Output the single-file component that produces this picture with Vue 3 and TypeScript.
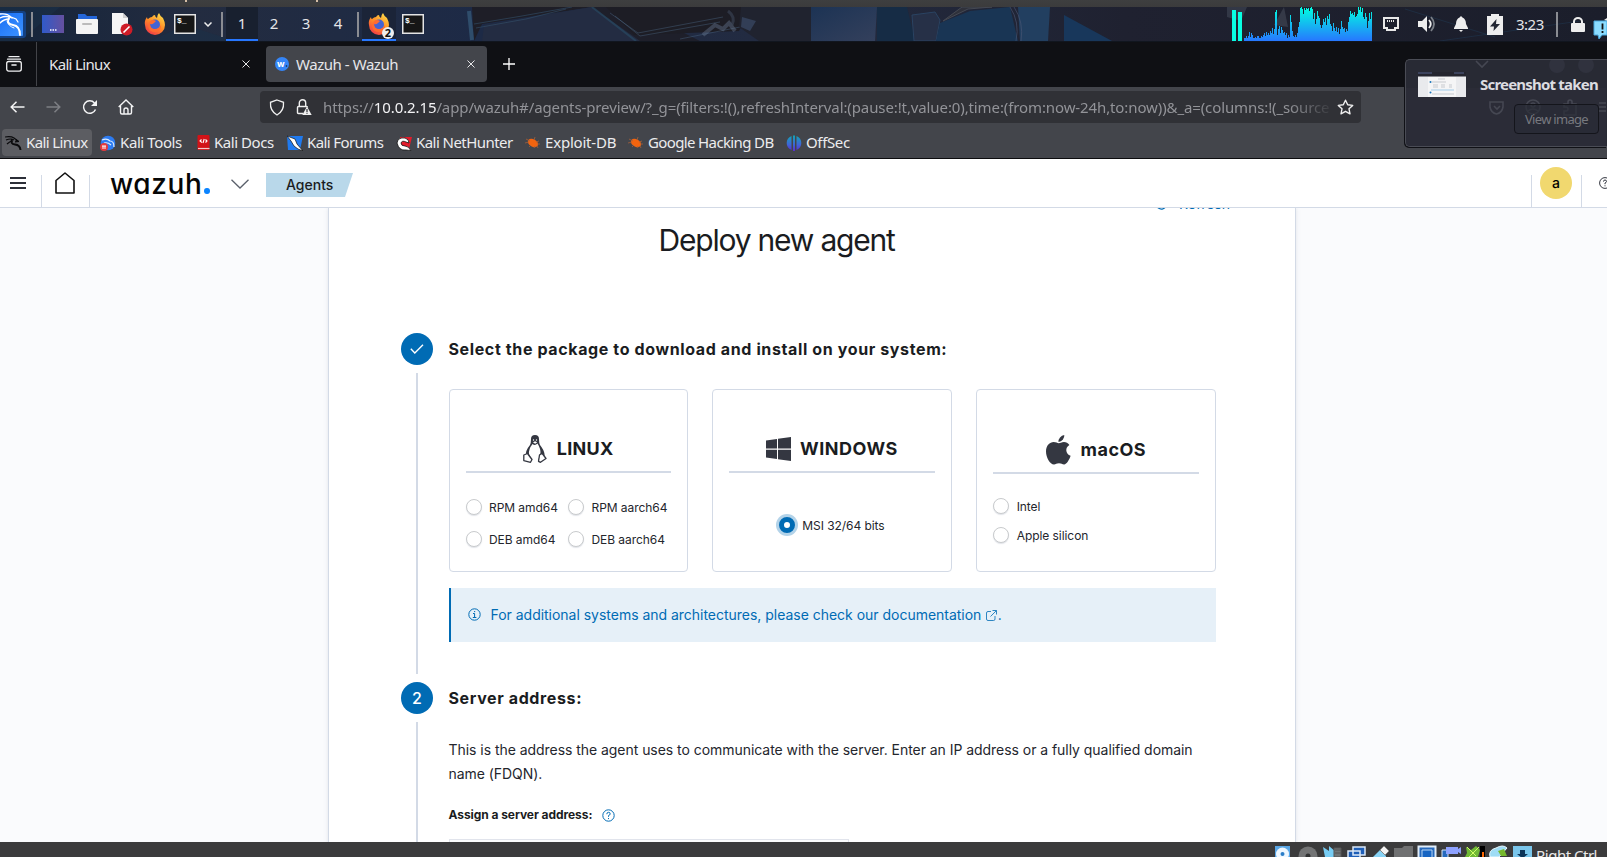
<script setup lang="ts">
interface Option { label: string; checked?: boolean }
interface Platform { id: string; name: string; options: Option[] }

const workspaces = ['1', '2', '3', '4']

const cpuLoad: number[] = [
  3, 3, 5, 3, 5, 9, 4, 8, 6, 3, 3, 4, 3, 5, 5, 3, 3, 5, 4, 6, 8, 5, 9, 6,
  8, 6, 10, 8, 13, 7, 12, 29, 31, 6, 12, 15, 8, 14, 11, 8, 9, 6, 8, 3, 6, 4, 26, 19,
  10, 5, 4, 6, 4, 8, 14, 19, 33, 34, 32, 27, 33, 31, 33, 32, 33, 30, 33, 34, 32, 22, 28, 17,
  22, 30, 25, 23, 16, 13, 16, 22, 19, 23, 16, 25, 22, 27, 17, 15, 10, 18, 13, 10, 14, 9, 13, 7,
  12, 20, 14, 12, 13, 9, 12, 10, 19, 24, 30, 27, 28, 26, 29, 24, 25, 27, 34, 31, 34, 29, 33, 24,
  22, 28, 24, 13, 20, 28, 22, 29,
]

const platforms: Platform[] = [
  {
    id: 'linux',
    name: 'LINUX',
    options: [{ label: 'RPM amd64' }, { label: 'RPM aarch64' }, { label: 'DEB amd64' }, { label: 'DEB aarch64' }],
  },
  { id: 'windows', name: 'WINDOWS', options: [{ label: 'MSI 32/64 bits', checked: true }] },
  { id: 'macos', name: 'macOS', options: [{ label: 'Intel' }, { label: 'Apple silicon' }] },
]
</script>

<template>
  <div class="screen">
    <div class="vm-top"><i class="t1"></i><i class="t2"></i></div>

    <div class="panel">
      <svg class="wallpaper" width="1607" height="34" viewBox="0 0 1607 34">
        <defs>
          <linearGradient id="wp" x1="0" x2="1">
            <stop offset="0" stop-color="#15243a" /><stop offset=".12" stop-color="#232c40" />
            <stop offset=".3" stop-color="#1d2a46" /><stop offset=".5" stop-color="#232b40" />
            <stop offset=".7" stop-color="#1f2130" /><stop offset="1" stop-color="#1b1e2b" />
          </linearGradient>
          <linearGradient id="blue" x1="0" x2="1" y2="1">
            <stop offset="0" stop-color="#1c3354" /><stop offset="1" stop-color="#34405c" />
          </linearGradient>
        </defs>
        <rect width="1607" height="34" fill="url(#wp)" />
        <path d="M0 0H60L20 34H0zM150 34l35-16 50 16z" fill="#1b3047" opacity=".6" />
        <path d="M472 0h120l-110 17-8 17z" fill="#1e1e27" />
        <path d="M592 0L484 18l-2 16h160z" fill="#232c42" />
        <path d="M474 17l48-8 50-9M476 21l50-9 40-10" fill="none" stroke="#34506a" opacity=".6" />
        <path d="M469 4l3 29" stroke="#3b6585" stroke-width="4" opacity=".6" />
        <path d="M592 0h40l68 34h-60z" fill="#1e1f2a" />
        <path d="M592 0l44 34" stroke="#294e67" stroke-width="2" opacity=".6" />
        <path d="M606 0h145l-12 24-105 4z" fill="#1d1d25" />
        <path d="M610 6l28 20 85-16M615 9l25 20 80-14M680 32l60-12" fill="none" stroke="#4a6480" opacity=".45" />
        <path d="M703 28l12-10 8 4 6-6 6 8" fill="none" stroke="#64748c" stroke-width="4" opacity=".45" />
        <path d="M728 4q8 6 4 14" fill="none" stroke="#3c4658" stroke-width="3" opacity=".6" />
        <path d="M741 0l-2 20 20 14h52V0z" fill="#20232f" />
        <path d="M742 10l14 4-6 10-9-4z" fill="#3a4a66" opacity=".7" />
        <path d="M811 0h66l-2 34h-64z" fill="url(#blue)" />
        <path d="M877 0h30l8 34h-38z" fill="#162c45" />
        <path d="M912 8l23-3 5 8-4 21h-22z" fill="#263047" stroke="#2a4362" />
        <path d="M940 16L970 4l40-4 8 34h-82z" fill="#193554" />
        <path d="M943 14l25-12 24-2h-30z" stroke="#55585e" fill="#35373d" opacity=".7" />
        <path d="M1018 0h32l-2 34h-28z" fill="#223f60" />
        <path d="M1010 0q10 15 6 34M1014 0q10 15 7 34" fill="none" stroke="#4c5876" opacity=".6" />
        <path d="M1064 8l48 26h-48z" fill="#18375b" />
        <path d="M1227 0h20l-6 14-14-4z" fill="#5a6472" opacity=".35" />
        <path d="M1274 18l10-18 4 20z" fill="#4b5260" opacity=".5" />
        <path d="M1405 2l90 28M1440 34l140-20" fill="none" stroke="#1f3953" opacity=".5" />
      </svg>

      <svg class="kali" width="30" height="30" viewBox="0 0 30 30">
        <defs><linearGradient id="kg" x1="0" x2="1" y2="1"><stop offset="0" stop-color="#176cf3" /><stop offset="1" stop-color="#3d93ff" /></linearGradient></defs>
        <rect x="-3" y="1" width="29" height="27" rx="3" fill="#134ba0" opacity=".7" />
        <rect x="-3" y="3" width="26" height="23" rx="1" fill="url(#kg)" />
        <g fill="none" stroke="#fff" stroke-linecap="round">
          <path d="M0 4q7-1 11 3l5 2 2 3M0 8q6-3 12 0M0 13q4-4 9-4" stroke-width="1.3" />
          <path d="M9 8q-3 6 4 7 7 1 7 10" stroke-width="1.9" />
          <path d="M7 11q1 5 7 7" stroke-width="1" />
        </g>
      </svg>
      <span class="sep s1"></span>

      <svg class="desk" width="22" height="18" viewBox="0 0 22 18">
        <defs><linearGradient id="dg" x1="0" x2="1"><stop offset="0" stop-color="#305ac9" /><stop offset="1" stop-color="#65509f" /></linearGradient></defs>
        <rect width="22" height="18" fill="url(#dg)" /><path d="M8 15h1.500m1 0h1.500m1 0h1.500" stroke="#fff" stroke-width="1.500" />
      </svg>
      <svg class="folder" width="22" height="20" viewBox="0 0 22 20">
        <path d="M2 0h7l2 2h10v6H2z" fill="#2566d8" /><rect y="5" width="22" height="15" rx="1" fill="#f4f4f4" />
        <rect x="6" y="9" width="10" height="2" rx="1" fill="#bbb" />
      </svg>
      <svg class="doc" width="22" height="23" viewBox="0 0 22 23">
        <path d="M1 0h11l5 5v16H1z" fill="#f5f5f5" /><path d="M12 0l5 5h-5z" fill="#cfcfcf" />
        <circle cx="15.500" cy="16.500" r="6" fill="#cf1c27" /><path d="M12.500 19.500l6-6" stroke="#fff" stroke-width="1.600" />
      </svg>
      <svg class="fox" width="22" height="22" viewBox="0 0 22 22">
        <defs>
          <linearGradient id="fx" x1=".8" x2=".2" y1="0" y2="1"><stop offset="0" stop-color="#ffe14a" /><stop offset=".5" stop-color="#ff8a26" /><stop offset="1" stop-color="#f0344a" /></linearGradient>
        </defs>
        <path d="M3 4q0 2 1 2 2-2 4-2 1-2 3-2 0 2 2 3 0-3 2-5 1 3 4 5 2 4 2 7a10 10 0 0 1-20 0Q0 8 3 4z" fill="url(#fx)" />
        <circle cx="11" cy="11.500" r="5" fill="#4463d4" /><path d="M6 8q3-2 6 0l-2 2q-2 2-4 1 0 5 5 5 4 0 6-4 0 7-6 7T4 13z" fill="#ff6b31" />
      </svg>
      <svg class="term" width="22" height="20" viewBox="0 0 22 20">
        <rect x=".75" y=".75" width="20.500" height="18.500" fill="#161616" stroke="#e4e4e4" stroke-width="1.500" />
        <text x="3" y="9" font-size="8" font-weight="700" fill="#fff" font-family="Liberation Mono, monospace">$_</text>
      </svg>
      <svg class="chev" width="8" height="5" viewBox="0 0 8 5"><path d="M.5.5L4 4 7.500.5" fill="none" stroke="#eee" stroke-width="1.500" /></svg>
      <span class="sep s2"></span>
      <div class="spaces">
        <span v-for="(w, i) in workspaces" :key="w" :class="{ on: i === 0 }">{{ w }}</span>
      </div>
      <span class="sep s3"></span>
      <div class="task">
        <svg width="22" height="22" viewBox="0 0 22 22">
          <path d="M3 4q0 2 1 2 2-2 4-2 1-2 3-2 0 2 2 3 0-3 2-5 1 3 4 5 2 4 2 7a10 10 0 0 1-20 0Q0 8 3 4z" fill="url(#fx)" />
          <circle cx="11" cy="11.500" r="5" fill="#4463d4" /><path d="M6 8q3-2 6 0l-2 2q-2 2-4 1 0 5 5 5 4 0 6-4 0 7-6 7T4 13z" fill="#ff6b31" />
        </svg>
        <b class="badge">2</b>
      </div>
      <svg class="term2" width="22" height="20" viewBox="0 0 22 20">
        <rect x=".75" y=".75" width="20.500" height="18.500" fill="#161616" stroke="#e4e4e4" stroke-width="1.500" />
        <text x="3" y="9" font-size="8" font-weight="700" fill="#fff" font-family="Liberation Mono, monospace">$_</text>
      </svg>

      <div class="tray">
        <svg class="graph" width="140" height="34" viewBox="0 0 140 34">
          <defs><linearGradient id="gg" gradientUnits="userSpaceOnUse" x1="0" x2="0" y1="0" y2="34"><stop offset="0" stop-color="#00ffe0" /><stop offset="1" stop-color="#2777ff" /></linearGradient></defs>
          <path d="M0 3h4v31H0zM6 5h4v29H6z" fill="#08ffe2" />
          <rect v-for="(h, i) in cpuLoad" :key="i" :x="12 + i" :y="34 - h" width="1" :height="h" fill="url(#gg)" />
        </svg>
        <svg class="eth" width="16" height="14" viewBox="0 0 16 14"><path d="M1 1h14v10h-3v2H4v-2H1z" fill="none" stroke="#e8e8e8" stroke-width="2" /><path d="M4.500 3v2m2-2v2m2-2v2m2-2v2" stroke="#e8e8e8" /></svg>
        <svg class="vol" width="18" height="16" viewBox="0 0 18 16"><path d="M0 5h4l5-5v16l-5-5H0z" fill="#eee" /><path d="M11 4q3.500 4 0 8" fill="none" stroke="#eee" stroke-width="1.800" /><path d="M13 1q6 7 0 14" fill="none" stroke="#7b8088" stroke-width="1.800" /></svg>
        <svg class="bell" width="14" height="16" viewBox="0 0 14 16"><path d="M7 0l1.500 1.500Q12 3 12 8l2 4v1H0v-1l2-4q0-5 3.500-6.500zM5 14h4l-2 2z" fill="#eee" /></svg>
        <svg class="bat" width="16" height="21" viewBox="0 0 16 21"><path d="M4 0h8v2h4v19H0V2h4z" fill="#eee" /><path d="M9.500 5L3 12.500h4L6.500 17 13 10H9z" fill="#222633" /></svg>
        <span class="clock">3:23</span>
        <span class="sep s4"></span>
        <svg class="lock" width="14" height="15" viewBox="0 0 14 15"><rect y="6" width="14" height="9" rx="1" fill="#eee" /><path d="M3 7V4.500a4 3.500 0 0 1 8 0V7" fill="none" stroke="#eee" stroke-width="2" /></svg>
        <svg class="bubble" width="14" height="22" viewBox="0 0 14 22"><path d="M11 2l3-2v3z" fill="#eee" /><path d="M1 3h13v14H9l-3 4-1-4H1z" fill="#8bdcff" stroke="#4aa8dd" /><path d="M9.500 5.500v6m0 1.500v2" stroke="#111" stroke-width="1.800" /></svg>
      </div>
    </div>

    <div class="tabs">
      <svg class="view" width="16" height="16" viewBox="0 0 16 16" fill="none" stroke="#f0f0f2" stroke-width="1.300" stroke-linecap="round"><path d="M3 .7h10M1.500 3.200h13" /><rect x=".7" y="5.500" width="14.600" height="9.600" rx="2" /><path d="M6 9h4" stroke-width="1.600" /></svg>
      <span class="tabsep"></span>
      <span class="tab1">Kali Linux</span>
      <svg class="x1" width="8" height="8" viewBox="0 0 8 8"><path d="M.5.5l7 7m0-7l-7 7" stroke="#e6e6e8" /></svg>
      <div class="active">
        <svg width="14" height="14" viewBox="0 0 14 14"><circle cx="7" cy="7" r="7" fill="#3585f7" /><text x="2" y="9.500" font-size="9" font-weight="700" fill="#fff" font-family="Inter, sans-serif">w</text><circle cx="11.500" cy="9" r=".8" fill="#123" /></svg>
        <span>Wazuh - Wazuh</span>
        <svg class="x2" width="8" height="8" viewBox="0 0 8 8"><path d="M.5.5l7 7m0-7l-7 7" stroke="#e6e6e8" /></svg>
      </div>
      <svg class="plus" width="12" height="12" viewBox="0 0 12 12"><path d="M6 0v12M0 6h12" stroke="#fff" stroke-width="1.300" /></svg>
    </div>

    <div class="nav">
      <svg class="back" width="15" height="12" viewBox="0 0 15 12" fill="none" stroke="#f4f4f5" stroke-width="1.500"><path d="M14.500 6H1M6.500.7L1.200 6l5.300 5.300" /></svg>
      <svg class="fwd" width="15" height="12" viewBox="0 0 15 12" fill="none" stroke="#7d7f84" stroke-width="1.500"><path d="M.5 6H14M8.500.7L13.800 6l-5.300 5.300" /></svg>
      <svg class="reload" width="16" height="16" viewBox="0 0 16 16"><path d="M13.500 10.500A6.200 6.200 0 1 1 12.500 4" fill="none" stroke="#f4f4f5" stroke-width="1.500" /><path d="M15 1v6H9z" fill="#f4f4f5" /></svg>
      <svg class="home" width="16" height="16" viewBox="0 0 16 16" fill="none" stroke="#f4f4f5" stroke-width="1.400"><path d="M.7 8L8 1l7.300 7M2.500 7v6.500q0 1.500 1.500 1.500h8q1.500 0 1.500-1.500V7" /><path d="M6 15v-4q0-2 2-2t2 2v4" /></svg>
      <div class="url">
        <svg class="shield" width="16" height="17" viewBox="0 0 16 17"><path d="M8 1l6.500 2.300q.7 8.700-6.500 12.700Q.8 12 1.500 3.300z" fill="none" stroke="#f0f0f0" stroke-width="1.300" /></svg>
        <svg class="warn" width="16" height="17" viewBox="0 0 16 17"><path d="M7 14.500H2.500q-1 0-1-1v-5q0-1 1-1h8q1 0 1 1M3.300 7V4a3.200 3.200 0 0 1 6.400 0v3" fill="none" stroke="#f0f0f0" stroke-width="1.400" /><path d="M11 7.500l4.700 8.500H6.300z" fill="#f0f0f0" /><path d="M11 10v3m0 .8v1" stroke="#303136" stroke-width="1.200" /></svg>
        <span class="addr">https://<b>10.0.2.15</b>/app/wazuh#/agents-preview/?_g=(filters:!(),refreshInterval:(pause:!t,value:0),time:(from:now-24h,to:now))&amp;_a=(columns:!(_source</span>
        <svg class="star" width="17" height="16" viewBox="0 0 17 16"><path d="M8.500 1.200l2.200 4.600 5 .6-3.700 3.400 1 5-4.500-2.500L4 14.800l1-5L1.300 6.400l5-.6z" fill="none" stroke="#f0f0f0" stroke-width="1.400" stroke-linejoin="round" /></svg>
      </div>
    </div>

    <div class="marks">
      <span class="mark cur">
        <svg width="17" height="16" viewBox="0 0 17 16" fill="none" stroke="#0b0b0d"><path d="M0 2q6-1 9 1l4 3M1 5q5-2 8 0M2 9q3-3 6-3" stroke-width="1.200" /><path d="M7 4q-2 5 3 5.500T15.500 15" stroke-width="2" /><path d="M11 4.500l3 2-4 .5" fill="#0b0b0d" /></svg>
        <span>Kali Linux</span>
      </span>
      <span class="mark m2">
        <svg width="16" height="16" viewBox="0 0 16 16"><circle cx="8" cy="8" r="7.300" fill="#2c7bf2" /><path d="M2 5q5-2 8 1 4 0 4 6M4 8q4-1 7 2" fill="none" stroke="#dcecff" stroke-width="1.200" /><circle cx="4" cy="12" r="4" fill="#e33b3f" /><path d="M2 11h4M3 11v3m2-3v3" stroke="#fff" /></svg>
        <span>Kali Tools</span>
      </span>
      <span class="mark m3">
        <svg width="13" height="16" viewBox="0 0 13 16"><rect x=".5" width="12" height="15" rx="1" fill="#d31217" /><path d="M1 13.500h11.500" stroke="#f3c9c9" stroke-width="1.200" /><path d="M4.500 4.500L3 6 5 7.500M8.500 4.500L10 6 8.500 7.500M7.200 4L6 8" fill="none" stroke="#fff" stroke-width="1.100" /></svg>
        <span>Kali Docs</span>
      </span>
      <span class="mark m4">
        <svg width="16" height="16" viewBox="0 0 16 16"><path d="M0 1h16l-3 14H1z" fill="#1f7af0" /><path d="M0 1l8 3 2 5 6 7-5-2-4-3-3-5z" fill="#fff" stroke="#111" stroke-width=".7" /></svg>
        <span>Kali Forums</span>
      </span>
      <span class="mark m5">
        <svg width="16" height="16" viewBox="0 0 16 16"><path d="M4 2h12l-3 12H5z" fill="#e31c2c" /><path d="M1 8q1-6 8-5 4 1 4 5l-3-1q-4-2-5 1 0 3 4 3 4 0 6 5-3-1-5-1-7 1-9-7z" fill="#fff" stroke="#111" stroke-width=".8" /></svg>
        <span>Kali NetHunter</span>
      </span>
      <span class="mark m6">
        <svg width="16" height="16" viewBox="0 0 16 16"><ellipse cx="8" cy="8" rx="5.500" ry="3.700" transform="rotate(28 8 8)" fill="#f2640f" /><path d="M1 4l4 2M0 8l4-1M4 12l2-2M9 13l1-2M10 2l-1 3M14 6l-3 1M15 9l-3 0M13 13l-1-2" stroke="#a5603a" stroke-width=".8" /></svg>
        <span>Exploit-DB</span>
      </span>
      <span class="mark m7">
        <svg width="16" height="16" viewBox="0 0 16 16"><ellipse cx="8" cy="8" rx="5.500" ry="3.700" transform="rotate(28 8 8)" fill="#f2640f" /><path d="M1 4l4 2M0 8l4-1M4 12l2-2M9 13l1-2M10 2l-1 3M14 6l-3 1M15 9l-3 0M13 13l-1-2" stroke="#a5603a" stroke-width=".8" /></svg>
        <span>Google Hacking DB</span>
      </span>
      <span class="mark m8">
        <svg width="16" height="16" viewBox="0 0 16 16"><defs><linearGradient id="os" x1="0" x2="0" y1="0" y2="1"><stop offset="0" stop-color="#12a5b6" /><stop offset=".6" stop-color="#3f63d8" /><stop offset="1" stop-color="#5a2bd0" /></linearGradient></defs><path d="M5.500 1v14A7.500 7.500 0 0 1 5.500 1zM10.500 1v14a7.500 7.500 0 0 0 0-14zM7 .5h2V16H7z" fill="url(#os)" /></svg>
        <span>OffSec</span>
      </span>
    </div>

    <header class="head">
      <svg class="burger" width="16" height="12" viewBox="0 0 16 12"><path d="M0 1h16M0 6h16M0 11h16" stroke="#2c2f38" stroke-width="2" /></svg>
      <span class="vr v1"></span>
      <svg class="house" width="20" height="22" viewBox="0 0 20 22"><path d="M1 8.500L10 1l9 7.500V21H1z" fill="none" stroke="#111" stroke-width="1.600" stroke-linejoin="round" /></svg>
      <span class="vr v2"></span>
      <span class="logo">wazuh<i></i></span>
      <svg class="down" width="18" height="10" viewBox="0 0 18 10"><path d="M.5.8L9 9l8.500-8.200" fill="none" stroke="#5a606b" stroke-width="1.300" /></svg>
      <span class="crumb">Agents</span>
      <span class="vr v3"></span>
      <span class="avatar">a</span>
      <span class="vr v4"></span>
      <svg class="help" width="12" height="12" viewBox="0 0 12 12"><circle cx="6" cy="6" r="5.400" fill="none" stroke="#343741" /><path d="M4.500 4.600Q4.500 3 6 3t1.500 1.400Q7.500 5.500 6 6v1.200M6 8.300v1" fill="none" stroke="#343741" /></svg>
    </header>

    <main class="body">
      <section class="page">
        <div class="refresh">
          <svg width="11" height="12" viewBox="0 0 11 12"><path d="M10 5A4.800 4.800 0 1 1 5.500 1.500" fill="none" stroke="#006bb4" stroke-width="1.300" /></svg>
          <span>Refresh</span>
        </div>
        <h1>Deploy new agent</h1>

        <div class="step first">
          <div class="rail">
            <span class="dot"><svg width="14" height="10" viewBox="0 0 14 10"><path d="M.8 4.800L4.800 9 13 .8" fill="none" stroke="#fff" stroke-width="1.400" /></svg></span>
            <span class="line"></span>
          </div>
          <div class="content">
            <h2>Select the package to download and install on your system:</h2>
            <div class="cards">
              <article v-for="p in platforms" :key="p.id" class="card" :class="p.id">
                <div class="os">
                  <svg v-if="p.id === 'linux'" width="24" height="28" viewBox="0 0 24 28">
                    <path d="M8 4Q8 0 12 0t4 4q0 4 1 6 4 5 4.500 9v3l-4.500 3H7l-4-4q-1-5 4-11 1-2 1-6z" fill="#343741" />
                    <path d="M9.500 9Q12 11 14.500 8.500 18 14 17.500 19L15 25.500H9L6 19Q5.500 14 9.500 9z" fill="#fff" />
                    <path d="M4.500 18.500l4.500 6-1.500 2.800L.8 25.600V20zM18.500 18.500l1.500 1 3 4-5.500 3.800-2-1 1-6.300z" fill="#fff" stroke="#343741" stroke-width="1.300" stroke-linejoin="round" />
                    <path d="M10 7.500l2-1.200 2.200 1-2 1.400z" fill="#fff" /><circle cx="10.500" cy="5" r=".7" fill="#fff" /><circle cx="13.500" cy="5" r=".7" fill="#fff" />
                  </svg>
                  <svg v-else-if="p.id === 'windows'" width="25" height="24" viewBox="0 0 25 24"><path d="M0 3.500l11-1.500v9.500H0zM12 1.800L25 0v11.500H12zM0 12.800h11V22L0 20.500zM12 12.800h13V24l-13-1.800z" fill="#343741" /></svg>
                  <svg v-else width="25" height="30" viewBox="0 0 25 30"><path d="M18.300 0q.3 2.600-1.500 4.700T12.500 7q-.3-2.500 1.500-4.600T18.300 0zM12.800 8.300c1.200 0 2.700-1.300 5.200-1.300 2 0 4.200 1 5.400 3-4.700 2.700-3.800 8.900 1.200 10.800-1.100 3.600-3.900 8.700-6.500 8.700-2 0-2.600-1.200-5.100-1.200s-3.200 1.200-5 1.200C4 29.500 0 22.500 0 16.500 0 10.500 3.800 7.100 7.600 7.100c2.300 0 3.900 1.200 5.200 1.200z" fill="#343741" /></svg>
                  <span>{{ p.name }}</span>
                </div>
                <div class="opts">
                  <label v-for="o in p.options" :key="o.label"><i :class="{ on: o.checked }"></i><span>{{ o.label }}</span></label>
                </div>
              </article>
            </div>
            <div class="callout">
              <svg class="info" width="13" height="13" viewBox="0 0 13 13" fill="none" stroke="#006bb4"><circle cx="6.500" cy="6.500" r="5.700" /><path d="M5 5.500h1.600v4M4.800 9.500h3.600M6 3.600h1.200" /></svg>
              <span>For additional systems and architectures, please check our documentation</span>
              <svg class="pop" width="11" height="11" viewBox="0 0 11 11" fill="none" stroke="#006bb4" stroke-opacity=".8"><path d="M5 1.500H2q-1.500 0-1.500 1.500v6q0 1.500 1.500 1.500h5.500Q9 10.500 9 9V6M6.500.5h4v4M10.300.7L4.500 6.500" /></svg><span class="dotend">.</span>
            </div>
          </div>
        </div>

        <div class="step">
          <div class="rail"><span class="dot">2</span><span class="line"></span></div>
          <div class="content">
            <h2>Server address:</h2>
            <p>This is the address the agent uses to communicate with the server. Enter an IP address or a fully qualified domain<br />name (FDQN).</p>
            <div class="field">
              <strong>Assign a server address:</strong>
              <svg width="13" height="13" viewBox="0 0 13 13" fill="none" stroke="#006bb4"><circle cx="6.500" cy="6.500" r="5.700" /><path d="M4.800 5.200q0-1.900 1.700-1.900t1.700 1.600q0 1.100-1.700 1.700v1.200M6.500 9v1.100" /></svg>
            </div>
            <div class="input"></div>
          </div>
        </div>
      </section>
    </main>

    <footer class="vm-bar">
      <svg width="262" height="15" viewBox="0 0 262 15">
        <rect x="1" y="4" width="15" height="14" fill="#5aa7e6" /><circle cx="8.500" cy="12" r="6.500" fill="#eef7ff" /><circle cx="8.500" cy="12" r="2" fill="#2a7dc8" />
        <circle cx="34" cy="14" r="9.500" fill="#737475" /><circle cx="34" cy="14" r="2.500" fill="#303132" />
        <path d="M49 5l6 4V4l7 6v5H51z" fill="#78cdf4" /><path d="M60 6h7v9h-7zM61 8h6m-6 3h6" fill="#707577" stroke="#555" />
        <path d="M79 5h12v8H79zM74 9h12v8H74z" fill="#1f5fb8" stroke="#dce9f8" stroke-width="1.500" />
        <path d="M99 15l7-7 6 6v1z" fill="#88d3f5" /><path d="M106 8l4-4 5 5-4 4z" fill="#f3f3f3" stroke="#888" />
        <path d="M120 6h8l2-2h9v11h-19z" fill="#707172" />
        <path d="M144.500 4.500h17V16h-17z" fill="#2569bd" stroke="#e1edf9" stroke-width="2" /><path d="M148 8h10v8h-10z" fill="#1765c3" stroke="#b5d5f5" />
        <path d="M168 8h6v8h-6z" fill="#2569bd" stroke="#d5e5f5" /><path d="M172 5h12v7h-12zM184 7l3-2v7l-3-2z" fill="#8ea2ff" />
        <path d="M206 4h5v11h-5z" fill="#000" /><path d="M209 10v5" stroke="#f60" stroke-width="2" /><path d="M192 5l5 3 5-4 4 4-2 7h-13l2-4z" fill="#70b936" /><path d="M193 5l9 9m3-9l-10 10" stroke="#d2ff65" />
        <path d="M216 15q-2-7 6-9 7-4 11 0l-8 9z" fill="#9edcf5" stroke="#e9f8ff" /><path d="M224 9l6-2 3 7h-6z" fill="#76b82c" />
        <path d="M239 4h19v11h-19z" fill="#7ac6eb" /><path d="M246 8h5v4h3l-5 4h-1l-5-4h3z" fill="#0c3457" />
      </svg>
      <span>Right Ctrl</span>
    </footer>

    <aside class="toast">
      <svg class="ghost" width="200" height="86" viewBox="0 0 200 86">
        <path d="M0 28h200v58H0z" fill="#303240" opacity=".35" />
        <g fill="none" stroke="#454752" stroke-width="1.600">
          <path d="M70 1l6 6 6-6M84 42h13v5q-1 6-6.500 7Q85 53 84 47zM88 46l3 3 3-3" />
          <circle cx="127" cy="47" r="7" /><circle cx="127" cy="45" r="2" /><path d="M122 51q5-4 10 0M158 44h4v-2a2 2 0 0 1 4 0v2h4v11h-12v-4h2a2 2 0 0 0 0-4h-2zM193 43h7M193 47h7M193 51h7" />
        </g>
        <circle cx="151" cy="5" r="8" fill="#30323e" /><circle cx="180" cy="5" r="8" fill="#30323e" />
      </svg>
      <svg class="thumb" width="48" height="25" viewBox="0 0 48 25">
        <rect width="48" height="25" fill="#e9eaed" /><rect width="48" height="4.500" fill="#24252f" /><path d="M0 1h14M36 1h10" stroke="#54628c" />
        <path d="M10 5h28v20H10z" fill="#f5f5f6" /><path d="M20 7h7M14 10h14M15 13h5m3 0h4m4 0h3M15 15h5m3 0h4m4 0h3M14 22h22" stroke="#b6b9bf" stroke-width=".7" />
        <path d="M13 18h23" stroke="#bcd8ec" stroke-width="1.500" /><circle cx="12.500" cy="10" r="1" fill="#1b75b9" /><circle cx="12.500" cy="20.500" r="1" fill="#1b75b9" />
      </svg>
      <div class="msg"><b>Screenshot taken</b><span class="btn">View image</span></div>
    </aside>
  </div>
</template>

<style>
body { margin: 0; overflow: hidden; }
</style>

<style scoped>
.screen { position: relative; width: 1607px; height: 857px; overflow: hidden; display: flex; flex-direction: column; font-family: 'Noto Sans', sans-serif; background: #fafbfd; }
svg { display: block; flex: none; }
.screen span { white-space: nowrap; }
.vm-top { height: 7px; flex: none; background: linear-gradient(#3e3f40, #3b3b3c); display: flex; }
.vm-top i { width: 2px; height: 2px; background: #d5bda5; }
.t1 { margin-left: 185px; }
.t2 { margin-left: 129px; }

.panel { position: relative; height: 34px; flex: none; display: flex; align-items: center; border-bottom: 1px solid #11161f; overflow: hidden; color: #e4e5e8; }
.wallpaper { position: absolute; left: 0; top: 0; }
.panel > *:not(.wallpaper) { position: relative; }
.kali { margin-top: 1px; }
.sep { width: 2px; height: 25px; background: #8a8c92; flex: none; }
.s1 { margin-left: 1px; }
.desk { margin-left: 9px; }
.folder { margin-left: 12px; }
.doc { margin-left: 13px; }
.fox { margin-left: 11px; }
.term { margin-left: 8px; }
.chev { margin-left: 8px; }
.s2 { margin-left: 9px; }
.spaces { display: flex; margin-left: 3px; align-self: stretch; }
.spaces span { width: 32px; text-align: center; font-size: 15px; line-height: 33px; box-sizing: border-box; height: 34px; }
.spaces .on { background: #18202f; border-bottom: 2px solid #2777ff; }
.s3 { margin-left: 3px; }
.task { align-self: stretch; width: 34px; height: 34px; box-sizing: border-box; margin-left: 3px; border-bottom: 2px solid #2777ff; padding: 6px 0 0 6px; background: #1b2438; }
.badge { position: absolute; left: 20px; top: 20px; width: 12px; height: 12px; border-radius: 6px; background: #eee; color: #111; font: 700 11px/12px 'Noto Sans', sans-serif; text-align: center; }
.term2 { margin-left: 6px; }
.tray { display: flex; align-items: center; margin-left: 808px; flex: none; }
.eth { margin-left: 11px; }
.vol { margin-left: 19px; }
.bell { margin-left: 18px; }
.bat { margin-left: 19px; }
.clock { margin-left: 13px; font-size: 15px; letter-spacing: -.5px; line-height: 20px; width: 28px; }
.s4 { margin-left: 12px; }
.lock { margin-left: 13px; }
.bubble { margin: 10px 0 0 8px; }

.tabs { height: 45px; flex: none; background: #0f1014; display: flex; align-items: center; color: #e6e6e9; font-size: 15px; box-sizing: border-box; padding-bottom: 1px; }
.view { margin-left: 6px; }
.tabsep { width: 1px; height: 44px; margin-left: 14px; background: #434449; }
.tab1 { margin: -1px 0 0 12px; width: 193px; letter-spacing: -.66px; }
.active { width: 221px; height: 36px; margin-left: 16px; border-radius: 4px; background: #43454b; box-sizing: border-box; padding-left: 9px; display: flex; align-items: center; }
.active span { margin: -1px 0 0 7px; letter-spacing: -.45px; width: 171px; }
.plus { margin-left: 16px; }

.nav { height: 37px; flex: none; background: #43454b; display: flex; align-items: center; padding-top: 3px; box-sizing: border-box; }
.back { margin-left: 10px; }
.fwd { margin-left: 21px; }
.reload { margin-left: 21px; }
.home { margin-left: 20px; }
.url { width: 1101px; height: 32px; margin-left: 126px; background: #303136; border-radius: 4px; display: flex; align-items: center; font-size: 15px; color: #929398; }
.shield { margin-left: 9px; }
.warn { margin-left: 11px; }
.addr { margin: -1px 0 0 11px; width: 1008px; overflow: hidden; letter-spacing: -.11px; mask-image: linear-gradient(90deg, #000 965px, transparent 1012px); }
.addr b { font-weight: 400; color: #f2f2f4; }
.star { margin-left: 6px; }

.marks { height: 35px; flex: none; background: #43454b; border-bottom: 1px solid #0c0c0e; box-sizing: border-box; display: flex; align-items: center; padding: 3px 0 0 2px; color: #ececee; font-size: 15px; letter-spacing: -.6px; }
.mark { display: flex; align-items: center; height: 27px; flex: none; }
.mark svg { margin-right: 4px; }
.mark span { margin-top: -2px; }
.cur { background: #5c5d62; border-radius: 4px; width: 90px; padding-left: 3px; box-sizing: border-box; }
.m2 { margin-left: 8px; width: 97px; letter-spacing: -.4px; }
.m3 { width: 90px; letter-spacing: -.45px; }
.m4 { width: 109px; }
.m5 { width: 129px; letter-spacing: -.55px; }
.m6 { width: 103px; letter-spacing: -.2px; }
.m7 { width: 158px; letter-spacing: -.63px; }
.m8 { letter-spacing: -.35px; }

.head { height: 49px; flex: none; box-sizing: border-box; background: #fff; border-bottom: 1px solid #d3dae6; display: flex; align-items: flex-start; font-family: Inter, sans-serif; }
.burger { margin: 18px 0 0 10px; }
.vr { width: 1px; height: 32px; margin-top: 16px; background: #d3dae6; flex: none; }
.v1 { margin-left: 15px; }
.house { margin: 13px 0 0 13px; }
.v2 { margin-left: 14px; }
.logo { display: flex; align-items: baseline; flex: none; margin: 7px 0 0 20px; width: 100px; font: 550 28px/36px Inter, sans-serif; font-feature-settings: 'cv11'; letter-spacing: .6px; color: #060606; }
.logo i { width: 6px; height: 6px; border-radius: 50%; background: #0b84ff; margin-left: 2px; }
.down { margin: 20px 0 0 21px; }
.crumb { flex: none; margin: 14px 0 0 17px; width: 87px; height: 24px; box-sizing: border-box; padding-left: 20px; background: #b9d8ea; clip-path: polygon(0 0, 100% 0, 79px 100%, 0 100%); font-size: 14px; font-weight: 500; line-height: 24px; color: #1a1c21; }
.v3 { margin-left: 1178px; }
.avatar { width: 32px; height: 32px; border-radius: 50%; background: #f1d86f; margin: 8px 0 0 8px; text-align: center; font-size: 14px; font-weight: 500; line-height: 32px; color: #000; flex: none; }
.v4 { margin-left: 9px; }
.help { margin: 18px 0 0 17px; }

.body { height: 634px; flex: none; overflow: hidden; font-family: Inter, sans-serif; color: #1a1c21; }
.page { width: 968px; height: 700px; box-sizing: border-box; margin-left: 328px; background: #fff; border: solid #d3dae6; border-width: 0 1px; box-shadow: 0 0 4px rgba(152, 162, 179, .25); display: flex; flex-direction: column; }
.refresh { display: flex; align-items: center; height: 20px; margin: -14px 0 0 827px; color: #006bb4; font-size: 14px; line-height: 20px; }
.refresh span { margin-left: 12px; }
h1 { margin: 6px 0 0 329.5px; font-size: 30px; line-height: 40px; font-weight: 400; letter-spacing: -1.2px; }
.step { display: flex; padding-left: 72px; height: 349px; flex: none; }
.first { margin-top: 73px; }
.rail { width: 32px; display: flex; flex-direction: column; align-items: center; }
.dot { width: 32px; height: 32px; border-radius: 50%; background: #006bb4; color: #fff; display: flex; align-items: center; justify-content: center; font-size: 16px; font-weight: 500; flex: none; }
.line { width: 2px; background: #d3dae6; flex: 1; margin: 8px 0; }
.content { width: 767.5px; margin-left: 15.5px; }
h2 { margin: 4px 0; font-size: 16px; line-height: 24px; font-weight: 700; letter-spacing: .62px; white-space: nowrap; }
.cards { display: grid; grid-template-columns: repeat(3, 1fr); gap: 24px; margin-top: 28px; }
.card { height: 183px; border: 1px solid #d3dae6; border-radius: 4px; padding: 40px 16px 0; box-sizing: border-box; }
.os { display: flex; align-items: center; justify-content: center; height: 43px; box-sizing: border-box; border-bottom: 2px solid #d3dae6; padding-bottom: 4px; font-size: 18px; line-height: 24px; font-weight: 700; letter-spacing: .5px; }
.os span { margin-left: 9.5px; }
.windows .os svg { margin-left: -1px; }
.linux .os { letter-spacing: .3px; }
.macos .os { height: 44px; padding-bottom: 3px; }
.opts { margin-top: 26px; font-size: 12px; line-height: 16px; letter-spacing: -.06px; color: #24262d; }
.linux .opts { display: grid; grid-template-columns: 102.5px 1fr; row-gap: 16px; }
.windows .opts { margin-top: 44px; display: flex; justify-content: center; padding-right: 1px; }
.macos .opts { margin-top: 24px; display: grid; row-gap: 13px; }
.opts label { display: flex; align-items: center; height: 16px; }
.opts i { width: 16px; height: 16px; box-sizing: border-box; border: 1px solid #c9cbcd; border-radius: 50%; box-shadow: 0 1px 1px rgba(152, 162, 179, .3); background: #fff; margin-right: 7.5px; flex: none; }
.opts i.on { border: 5px solid #006bb4; box-shadow: 0 0 0 3px #b3d3e9; }
.opts span { padding-top: 1px; }
.callout { margin-top: 16px; height: 54px; box-sizing: border-box; background: #e6f0f8; border-left: 2px solid #006bb4; padding-left: 17.5px; display: flex; align-items: center; color: #006bb4; font-size: 14px; letter-spacing: -.02px; line-height: 24px; }
.info { margin: -1px 9.5px 0 0; }
.pop { margin-left: 4.5px; margin-top: 1px; }
.dotend { margin-left: 1px; }
p { margin: 28px 0 0; font-size: 14px; line-height: 24px; letter-spacing: -.045px; color: #24262d; white-space: nowrap; }
.field { margin-top: 20px; height: 18px; display: flex; align-items: center; font-size: 12px; line-height: 18px; letter-spacing: -.06px; }
.field svg { margin-left: 10px; }
.input { width: 400px; height: 40px; margin-top: 15px; box-sizing: border-box; border: 1px solid #e1e4ec; background: #fbfcfd; }

.vm-bar { height: 15px; flex: none; background: #3b3b3c; display: flex; overflow: hidden; padding-left: 1274px; color: #e9e9e9; }
.vm-bar span { font-size: 15px; letter-spacing: -.5px; line-height: 20px; margin-top: 3px; }

.toast { position: absolute; left: 1405px; top: 59px; width: 202px; height: 88px; box-sizing: border-box; background: #282a34; border: 1px solid #4a4c55; border-width: 1px 0 1px 1px; border-radius: 5px 0 0 5px; box-shadow: -1px 1px 0 #101116; display: flex; overflow: hidden; }
.ghost { position: absolute; left: 0; top: 0; }
.thumb { position: relative; margin: 12px 0 0 12px; }
.msg { position: relative; margin: 13px 0 0 14px; display: flex; flex-direction: column; align-items: flex-start; color: #dcdce0; }
.msg b { font-size: 15px; line-height: 22px; letter-spacing: -.8px; white-space: nowrap; }
.btn { width: 85px; height: 30px; margin: 9px 0 0 34px; box-sizing: border-box; border: 1px solid #14151b; border-radius: 4px; background: #292b36b0; color: #77797f; font-size: 13px; line-height: 28px; text-align: center; letter-spacing: -.7px; }
</style>
